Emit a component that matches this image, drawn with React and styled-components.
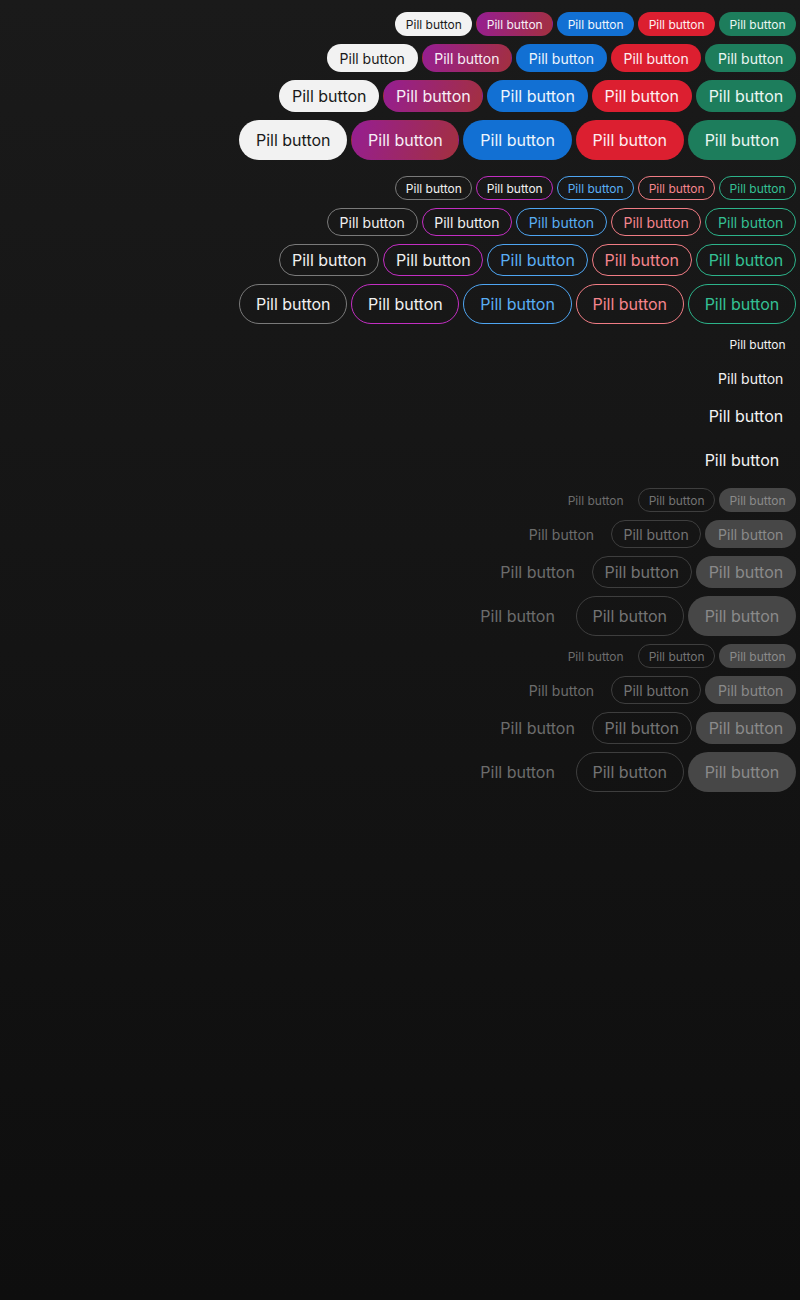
import React from 'react';
import styled, { createGlobalStyle, css } from 'styled-components';

const GlobalStyle = createGlobalStyle`
  html, body {
    margin: 0;
    padding: 0;
  }
  body {
    min-height: 100vh;
    background: linear-gradient(180deg, #1a1a1a 0%, #0e0e0e 100%);
    font-family: Inter, "Noto Sans", sans-serif;
  }
`;

const sizes = {
  sm: { height: 24, font: 12, pad: 9.5 },
  md: { height: 28, font: 14, pad: 11.7 },
  lg: { height: 32, font: 16, pad: 11.8 },
  xl: { height: 40, font: 16, pad: 15.8 },
};

const filled = {
  neutral: css`background: #f2f2f2; color: #1a1a1a;`,
  purple: css`background: linear-gradient(110deg, #961e92 0%, #a3303f 100%); color: #f6eef6;`,
  blue: css`background: #1270d3; color: #eef5fc;`,
  red: css`background: #dc1f30; color: #fdeef0;`,
  green: css`background: #1d7d5c; color: #eaf6f1;`,
};

const outlined = {
  neutral: css`border-color: #7a7a7a; color: #f0f0f0;`,
  purple: css`border-color: #c22ec2; color: #f0f0f0;`,
  blue: css`border-color: #4ea5f2; color: #5aaef4;`,
  red: css`border-color: #f07c84; color: #f5858d;`,
  green: css`border-color: #2cb38a; color: #34c094;`,
};

const Page = styled.main`
  display: flex;
  flex-direction: column;
  align-items: flex-end;
  gap: 8px;
  padding: 12px 4px;
`;

const Group = styled.section`
  display: flex;
  flex-direction: column;
  align-items: flex-end;
  gap: 8px;
  margin-bottom: ${(p) => (p.$spaced ? '8px' : '0')};
`;

const Row = styled.div`
  display: flex;
  gap: 4px;
`;

const Pill = styled.button`
  box-sizing: border-box;
  display: inline-flex;
  align-items: center;
  justify-content: center;
  height: ${(p) => sizes[p.$size].height}px;
  padding: 0 ${(p) => sizes[p.$size].pad}px;
  font-family: Inter, "Noto Sans", sans-serif;
  font-size: ${(p) => sizes[p.$size].font}px;
  font-weight: 400;
  white-space: nowrap;
  border: 1px solid transparent;
  border-radius: 999px;
  background: transparent;
  cursor: pointer;

  ${(p) => p.$variant === 'filled' && filled[p.$tone]}
  ${(p) => p.$variant === 'outline' && outlined[p.$tone]}
  ${(p) => p.$variant === 'ghost' && css`color: #f2f2f2;`}

  &:disabled {
    cursor: default;
    ${(p) => p.$variant === 'ghost' && css`color: #6c6c6c;`}
    ${(p) => p.$variant === 'outline' && css`border-color: #3e3e3e; color: #737373;`}
    ${(p) => p.$variant === 'filled' && css`background: #474747; color: #8a8a8a;`}
  }
`;

const tones = ['neutral', 'purple', 'blue', 'red', 'green'];
const sizeKeys = ['sm', 'md', 'lg', 'xl'];
const label = 'Pill button';

const ToneRows = ({ variant }) =>
  sizeKeys.map((size) => (
    <Row key={size}>
      {tones.map((tone) => (
        <Pill key={tone} $variant={variant} $tone={tone} $size={size}>
          {label}
        </Pill>
      ))}
    </Row>
  ));

const DisabledRows = () =>
  sizeKeys.map((size) => (
    <Row key={size}>
      {['ghost', 'outline', 'filled'].map((variant) => (
        <Pill key={variant} $variant={variant} $tone="neutral" $size={size} disabled>
          {label}
        </Pill>
      ))}
    </Row>
  ));

export default function App() {
  return (
    <>
      <GlobalStyle />
      <Page>
        <Group $spaced>
          <ToneRows variant="filled" />
        </Group>
        <Group>
          <ToneRows variant="outline" />
        </Group>
        <Group>
          {sizeKeys.map((size) => (
            <Row key={size}>
              <Pill $variant="ghost" $tone="neutral" $size={size}>
                {label}
              </Pill>
            </Row>
          ))}
        </Group>
        <Group>
          <DisabledRows />
        </Group>
        <Group>
          <DisabledRows />
        </Group>
      </Page>
    </>
  );
}
